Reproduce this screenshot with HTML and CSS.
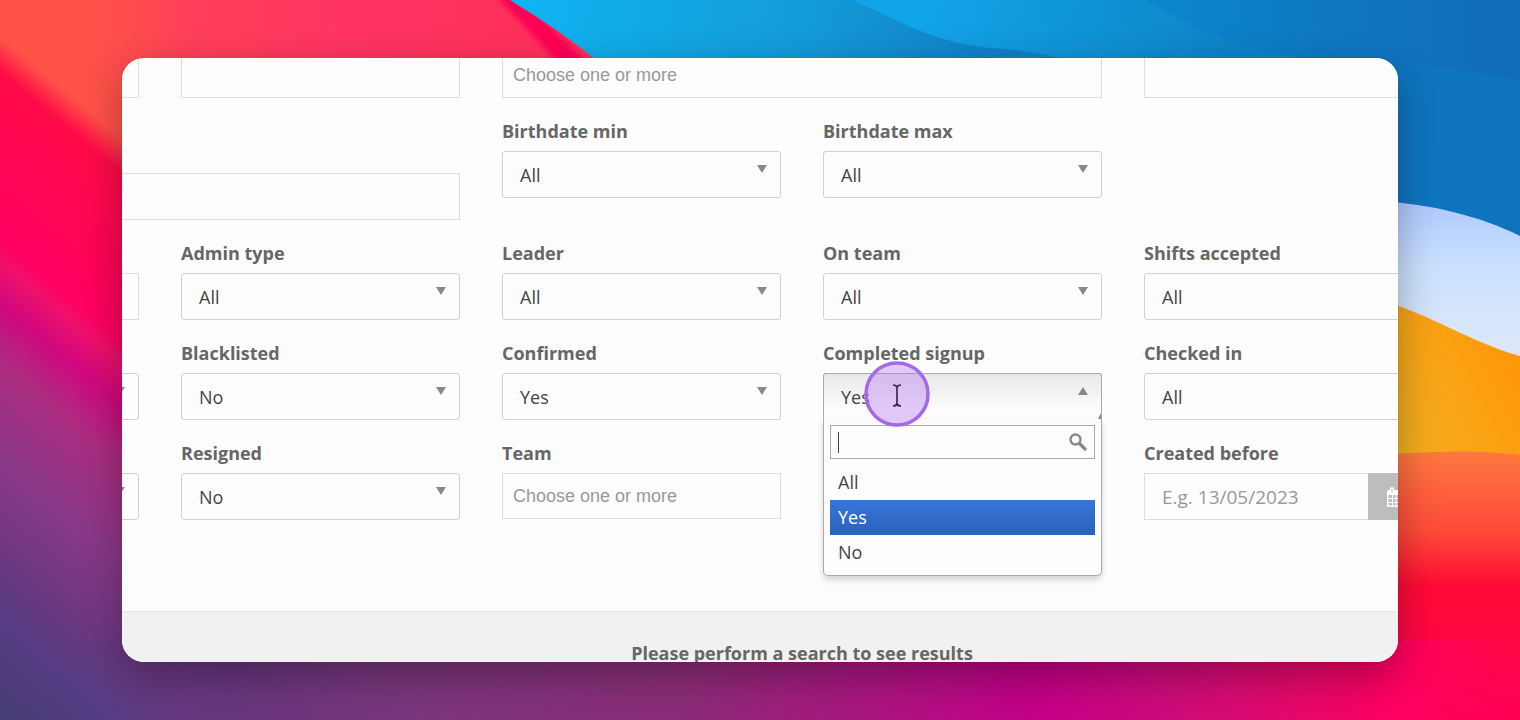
FILE: index.html
```
<!DOCTYPE html>
<html lang="en">
<head>
  <meta charset="UTF-8">
  <title>Search</title>
  <link rel="stylesheet" href="styles.css">
</head>
<body>
  <svg class="wallpaper" viewBox="0 0 1520 720" preserveAspectRatio="none" aria-hidden="true">
    <defs>
      <linearGradient id="left" gradientUnits="userSpaceOnUse" x1="0" y1="0" x2="-355" y2="427">
        <stop offset="0.05" stop-color="#ff5248"/>
        <stop offset="0.1" stop-color="#ff0a48"/>
        <stop offset="0.33" stop-color="#ff0060"/>
        <stop offset="0.36" stop-color="#f0106c"/>
        <stop offset="0.42" stop-color="#d0087e"/>
        <stop offset="0.5" stop-color="#ac2c80"/>
        <stop offset="0.64" stop-color="#883888"/>
        <stop offset="0.77" stop-color="#6c3882"/>
        <stop offset="0.86" stop-color="#553c82"/>
        <stop offset="0.97" stop-color="#483c78"/>
      </linearGradient>
      <linearGradient id="rose" gradientUnits="userSpaceOnUse" x1="80" y1="0" x2="600" y2="0">
        <stop offset="0" stop-color="#ff4a50" stop-opacity="0"/>
        <stop offset="0.2" stop-color="#ff4058"/>
        <stop offset="0.5" stop-color="#ff3462"/>
        <stop offset="1" stop-color="#ff3058"/>
      </linearGradient>
      <linearGradient id="blue-a" gradientUnits="userSpaceOnUse" x1="520" y1="0" x2="980" y2="120">
        <stop offset="0" stop-color="#10b4f2"/>
        <stop offset="0.6" stop-color="#149ad8"/>
        <stop offset="1" stop-color="#1080c6"/>
      </linearGradient>
      <linearGradient id="blue-b" gradientUnits="userSpaceOnUse" x1="920" y1="0" x2="1220" y2="80">
        <stop offset="0" stop-color="#12a4e8"/>
        <stop offset="1" stop-color="#0e84c8"/>
      </linearGradient>
      <linearGradient id="blue-c" gradientUnits="userSpaceOnUse" x1="1180" y1="30" x2="1520" y2="0">
        <stop offset="0" stop-color="#0a84cc"/>
        <stop offset="0.6" stop-color="#1074bf"/>
        <stop offset="1" stop-color="#116ab6"/>
      </linearGradient>
      <linearGradient id="sky" x1="0" y1="0" x2="0" y2="1">
        <stop offset="0" stop-color="#b0c8ff"/>
        <stop offset="0.4" stop-color="#cae2ff"/>
        <stop offset="1" stop-color="#e2e8f6"/>
      </linearGradient>
      <linearGradient id="orange" x1="0" y1="1" x2="1" y2="0.4">
        <stop offset="0" stop-color="#f0b424"/>
        <stop offset="1" stop-color="#ff980a"/>
      </linearGradient>
      <linearGradient id="coral" x1="0" y1="0" x2="0" y2="1">
        <stop offset="0" stop-color="#ff7840"/>
        <stop offset="0.3" stop-color="#ff4a38"/>
        <stop offset="0.5" stop-color="#ff0a36"/>
        <stop offset="1" stop-color="#ff0056"/>
      </linearGradient>
      <linearGradient id="floor" gradientUnits="userSpaceOnUse" x1="0" y1="0" x2="1520" y2="0">
        <stop offset="0.05" stop-color="#553c82" stop-opacity="0"/>
        <stop offset="0.15" stop-color="#68367e"/>
        <stop offset="0.28" stop-color="#7c367c"/>
        <stop offset="0.45" stop-color="#8c2c78"/>
        <stop offset="0.58" stop-color="#ac1480"/>
        <stop offset="0.68" stop-color="#c40088"/>
        <stop offset="0.78" stop-color="#d00c78"/>
        <stop offset="0.86" stop-color="#e8086a"/>
        <stop offset="0.92" stop-color="#ff0060"/>
        <stop offset="1" stop-color="#ff0056" stop-opacity="0"/>
      </linearGradient>
      <filter id="edge" x="-20%" y="-20%" width="140%" height="140%">
        <feGaussianBlur stdDeviation="3"/>
      </filter>
    </defs>

    <!-- left side folds -->
    <rect width="1520" height="720" fill="url(#left)"/>
    <rect x="80" width="560" height="80" fill="url(#rose)"/>
    <path d="M494 -20Q556 24 620 100L600 110Q548 50 490 -10Z" fill="#ff0055" filter="url(#edge)"/>

    <!-- right side folds -->
    <path d="M510 0C545 22 570 38 598 62L700 400H1520V0Z" fill="url(#blue-a)"/>
    <path d="M852 0C900 20 930 42 990 48C1030 50 1050 56 1080 62H1520V0Z" fill="url(#blue-b)"/>
    <path d="M1146 0C1180 20 1230 48 1310 60L1380 260H1520V0Z" fill="url(#blue-c)"/>
    <path d="M1380 64Q1460 66 1520 80V240H1380Z" fill="#0e78c0" opacity="0.6"/>
    <path d="M1380 201C1430 204 1480 216 1520 236V370H1380Z" fill="url(#sky)"/>
    <path d="M1380 300C1430 314 1470 342 1520 356V470H1380Z" fill="url(#orange)"/>
    <path d="M1380 455Q1470 448 1520 455V720H1380Z" fill="url(#coral)"/>

    <rect x="76" y="640" width="1444" height="80" fill="url(#floor)"/>
  </svg>

  <main class="window">
    <form class="filters">
      <div class="field">
        <input type="text" class="text-input" aria-label="Filter">
      </div>
      <div class="field">
        <input type="text" class="text-input" aria-label="Filter">
      </div>
      <div class="field span-two">
        <input type="text" class="text-input tags-input" placeholder="Choose one or more" aria-label="Choose one or more">
      </div>
      <div class="field">
        <input type="text" class="text-input" aria-label="Filter">
      </div>

      <div class="field field-tall span-two">
        <input type="text" class="text-input" aria-label="Filter">
      </div>
      <div class="field field-top">
        <label for="birthdate-min">Birthdate min</label>
        <div class="select"><select id="birthdate-min"><option>All</option></select></div>
      </div>
      <div class="field field-top">
        <label for="birthdate-max">Birthdate max</label>
        <div class="select"><select id="birthdate-max"><option>All</option></select></div>
      </div>

      <div class="field first-column">
        <input type="text" class="text-input" aria-label="Filter">
      </div>
      <div class="field">
        <label for="admin-type">Admin type</label>
        <div class="select"><select id="admin-type"><option>All</option></select></div>
      </div>
      <div class="field">
        <label for="leader">Leader</label>
        <div class="select"><select id="leader"><option>All</option><option>Yes</option><option>No</option></select></div>
      </div>
      <div class="field">
        <label for="on-team">On team</label>
        <div class="select"><select id="on-team"><option>All</option><option>Yes</option><option>No</option></select></div>
      </div>
      <div class="field">
        <label for="shifts-accepted">Shifts accepted</label>
        <div class="select"><select id="shifts-accepted"><option>All</option><option>Yes</option><option>No</option></select></div>
      </div>

      <div class="field">
        <div class="select"><select aria-label="Filter"></select></div>
      </div>
      <div class="field">
        <label for="blacklisted">Blacklisted</label>
        <div class="select"><select id="blacklisted"><option>No</option><option>Yes</option></select></div>
      </div>
      <div class="field">
        <label for="confirmed">Confirmed</label>
        <div class="select"><select id="confirmed"><option>Yes</option><option>No</option></select></div>
      </div>
      <div class="field">
        <label for="completed-signup">Completed signup</label>
        <div class="select open">
          <select id="completed-signup"><option>Yes</option><option>No</option></select>
          <div class="dropdown">
            <div class="dropdown-search">
              <input type="text" aria-label="Search options">
              <span class="caret"></span>
              <svg class="search-icon" viewBox="0 0 18 18" aria-hidden="true">
                <circle cx="6.5" cy="6.5" r="5" fill="none" stroke="#888" stroke-width="2.4"/>
                <path d="M10.5 10.5L16 16" stroke="#888" stroke-width="3.2" stroke-linecap="round"/>
              </svg>
            </div>
            <ul class="options" role="listbox" aria-label="Completed signup">
              <li role="option">All</li>
              <li role="option" class="highlighted" aria-selected="true">Yes</li>
              <li role="option">No</li>
            </ul>
          </div>
          <svg class="pointer" viewBox="0 0 66 66" aria-hidden="true">
            <circle cx="33" cy="33" r="31" fill="#b070f0" fill-opacity="0.36" stroke="#a568e6" stroke-width="3.5"/>
            <path d="M29 24Q32.5 24 33 26.5Q33.5 24 37 24M33 26V43M29 45Q32.5 45 33 42.5Q33.5 45 37 45" fill="none" stroke="#3c2a50" stroke-width="1.7"/>
          </svg>
        </div>
      </div>
      <div class="field">
        <label for="checked-in">Checked in</label>
        <div class="select"><select id="checked-in"><option>All</option><option>Yes</option><option>No</option></select></div>
      </div>

      <div class="field">
        <div class="select"><select aria-label="Filter"></select></div>
      </div>
      <div class="field">
        <label for="resigned">Resigned</label>
        <div class="select"><select id="resigned"><option>No</option><option>Yes</option></select></div>
      </div>
      <div class="field field-top">
        <label for="team">Team</label>
        <input type="text" id="team" class="text-input tags-input" placeholder="Choose one or more">
      </div>
      <div class="field last-column">
        <label for="created-before">Created before</label>
        <div class="date-group">
          <input type="text" id="created-before" class="text-input date-input" placeholder="E.g. 13/05/2023">
          <button type="button" class="date-button" aria-label="Open calendar">
            <svg class="calendar-icon" viewBox="0 0 18 20" aria-hidden="true">
              <rect x="0" y="3" width="18" height="17" rx="1.5" fill="#fff"/>
              <rect x="3" y="0" width="4" height="6" rx="2" fill="#fff"/>
              <rect x="11" y="0" width="4" height="6" rx="2" fill="#fff"/>
              <path d="M5 2V5M13 2V5" stroke="#bdbdbd"/>
              <path d="M1.5 8H5V11H1.5ZM6 8H8.6V11H6ZM9.5 8H12V11H9.5ZM13 8H16.5V11H13ZM1.5 12H5V15H1.5ZM6 12H8.6V15H6ZM9.5 12H12V15H9.5ZM13 12H16.5V15H13ZM1.5 16H5V18.5H1.5ZM6 16H8.6V18.5H6ZM9.5 16H12V18.5H9.5ZM13 16H16.5V18.5H13Z" fill="#bdbdbd"/>
            </svg>
          </button>
        </div>
      </div>
    </form>

    <section class="results">
      <p>Please perform a search to see results</p>
    </section>
  </main>
</body>
</html>
```
FILE: styles.css
```
* {
  box-sizing: border-box;
}

body {
  margin: 0;
  height: 100vh;
  padding: 58px 122px;
  display: flex;
  overflow: hidden;
  font-family: "Open Sans", "Noto Sans", sans-serif;
  font-size: 18px;
  line-height: 20px;
  color: #444;
}

.wallpaper {
  position: absolute;
  inset: 0;
  z-index: -1;
  width: 100%;
  height: 100%;
}

.window {
  flex: 1;
  min-width: 0;
  display: flex;
  flex-direction: column;
  overflow: hidden;
  background-color: #fdfdfd;
  border-radius: 22px;
  box-shadow: 0 14px 40px rgba(0, 0, 0, 0.32);
}

/* The form is wider than the window and scrolled a little down */
.filters {
  flex-shrink: 0;
  display: grid;
  grid-template-columns: repeat(5, 1fr);
  gap: 23px 42px;
  margin: -37px -25px 0 -262px;
  padding-bottom: 91px;
}

.field {
  min-width: 0;
  min-height: 77px;
  display: flex;
  flex-direction: column;
  justify-content: flex-end;
}

.field-top {
  justify-content: flex-start;
}

.field-tall {
  min-height: 99px;
}

.span-two {
  grid-column: span 2;
}

.first-column {
  grid-column: 1;
}

.last-column {
  grid-column: 5;
}

label {
  margin-bottom: 10px;
  font-weight: bold;
  color: #666;
}

.text-input {
  width: 100%;
  height: 47px;
  padding: 0 17px;
  border: 1px solid #ddd;
  border-radius: 0;
  background-color: #fdfdfd;
  font: inherit;
  color: inherit;
  outline: none;
}

.text-input::placeholder {
  color: #999;
  opacity: 1;
}

.tags-input {
  height: 46px;
  padding: 0 10px;
  font-family: "Liberation Sans", Arial, sans-serif;
}

.select {
  position: relative;
}

.select select {
  display: block;
  width: 100%;
  height: 47px;
  padding: 0 17px;
  appearance: none;
  border: 1px solid #cdd2d5;
  border-radius: 3px;
  background-color: #fdfdfd;
  font: inherit;
  color: inherit;
}

.select::after {
  content: "";
  position: absolute;
  top: 14px;
  right: 14px;
  border: 5px solid transparent;
  border-top: 8px solid #888;
  border-bottom: 0;
}

.select.open::after {
  border-top: 0;
  border-bottom: 8px solid #888;
}

.select.open select {
  border-color: #aaa;
  border-bottom-color: transparent;
  border-radius: 3px 3px 0 0;
  background-image: linear-gradient(#e8e8e8, #fdfdfd 80%);
}

.dropdown {
  position: absolute;
  top: 46px;
  left: 0;
  right: 0;
  padding: 6px 6px 5px;
  background-color: #fdfdfd;
  border: 1px solid #aaa;
  border-top: 0;
  border-radius: 0 0 5px 5px;
  box-shadow: 0 4px 6px rgba(0, 0, 0, 0.16);
}

.dropdown::before {
  content: "";
  position: absolute;
  top: -6px;
  right: 0;
  border-left: 3px solid transparent;
  border-bottom: 6px solid #888;
}

.dropdown-search {
  position: relative;
}

.dropdown-search input {
  display: block;
  width: 100%;
  height: 34px;
  padding: 0 30px 0 8px;
  border: 1px solid #aaa;
  background-color: #fdfdfd;
  font: inherit;
  outline: none;
}

.caret {
  position: absolute;
  top: 7px;
  left: 8px;
  width: 1px;
  height: 21px;
  background-color: #444;
}

.search-icon {
  position: absolute;
  top: 8px;
  right: 8px;
  width: 18px;
  height: 18px;
}

.options {
  margin: 6px 0 0;
  padding: 0;
  list-style: none;
}

.options li {
  padding: 7px 8px 8px;
}

.options .highlighted {
  background-image: linear-gradient(#3875d7, #2a62bc);
  color: #fff;
}

.pointer {
  position: absolute;
  top: -12px;
  left: 41px;
  width: 66px;
  height: 66px;
}

.date-group {
  display: flex;
}

.date-input {
  flex: 1;
  min-width: 0;
  border-right: 0;
  font-size: 19px;
}

.date-button {
  width: 55px;
  height: 47px;
  padding: 0;
  border: 0;
  background-color: #bdbdbd;
}

.calendar-icon {
  width: 18px;
  height: 20px;
  vertical-align: middle;
}

.results {
  flex: 1;
  min-height: 0;
  padding: 31px 0 0 84px;
  background-color: #f1f1f1;
  border-top: 1px solid #e4e4e4;
  text-align: center;
  font-weight: bold;
  color: #666;
}

.results p {
  margin: 0;
}
```
